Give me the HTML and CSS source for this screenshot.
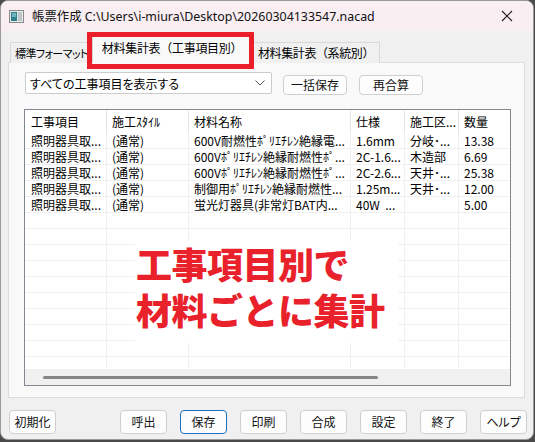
FILE: index.html
```html
<!DOCTYPE html>
<html lang="ja">
<head>
<meta charset="utf-8">
<link rel="stylesheet" href="styles.css">
</head>
<body>
<div class="window">
  <div class="titlebar">
    <svg class="appicon" width="15" height="13" viewBox="0 0 15 13">
      <rect x="0.5" y="0.5" width="14" height="12" fill="#e8e8e8" stroke="#8a8a8a"/>
      <rect x="2" y="2" width="6" height="9" fill="#2f7f8f"/>
      <rect x="3" y="3" width="4" height="4" fill="#6fb2c0"/>
      <rect x="9" y="2" width="4" height="9" fill="#bfc6c9"/>
    </svg>
    <span class="title">帳票作成 C:\Users\i-miura\Desktop\20260304133547.nacad</span>
    <svg class="close" width="12" height="12" viewBox="0 0 12 12">
      <path d="M1 1 L11 11 M11 1 L1 11" stroke="#222" stroke-width="1.1" fill="none"/>
    </svg>
  </div>
  <div class="content">
    <div class="tabs">
      <div class="tab t1">標準フォーマット</div>
      <div class="tab active t2">材料集計表（工事項目別）<span class="redbox"></span></div>
      <div class="tab t3">材料集計表（系統別）</div>
    </div>
    <div class="panel">
      <div class="toolbar">
        <div class="combo">
          <span>すべての工事項目を表示する</span>
          <svg class="chev" width="10" height="6" viewBox="0 0 10 6"><path d="M0.5 0.5 L5 5 L9.5 0.5" stroke="#555" stroke-width="1" fill="none"/></svg>
        </div>
        <button class="btn tb">一括保存</button>
        <button class="btn tb">再合算</button>
      </div>
      <div class="list">
        <div class="lhead">
          <div class="c c1">工事項目</div>
          <div class="c c2">施工ｽﾀｲﾙ</div>
          <div class="c c3">材料名称</div>
          <div class="c c4">仕様</div>
          <div class="c c5">施工区...</div>
          <div class="c c6">数量</div>
        </div>
        <div class="lbody">
          <div class="row"><div class="c c1">照明器具取...</div><div class="c c2">(通常)</div><div class="c c3">600V耐燃性ﾎﾟﾘｴﾁﾚﾝ絶縁電...</div><div class="c c4">1.6mm</div><div class="c c5">分岐･...</div><div class="c c6">13.38</div></div>
          <div class="row"><div class="c c1">照明器具取...</div><div class="c c2">(通常)</div><div class="c c3">600Vﾎﾟﾘｴﾁﾚﾝ絶縁耐燃性ﾎﾟ...</div><div class="c c4">2C-1.6...</div><div class="c c5">木造部</div><div class="c c6">6.69</div></div>
          <div class="row"><div class="c c1">照明器具取...</div><div class="c c2">(通常)</div><div class="c c3">600Vﾎﾟﾘｴﾁﾚﾝ絶縁耐燃性ﾎﾟ...</div><div class="c c4">2C-2.6...</div><div class="c c5">天井･...</div><div class="c c6">25.38</div></div>
          <div class="row"><div class="c c1">照明器具取...</div><div class="c c2">(通常)</div><div class="c c3">制御用ﾎﾟﾘｴﾁﾚﾝ絶縁耐燃性...</div><div class="c c4">1.25m...</div><div class="c c5">天井･...</div><div class="c c6">12.00</div></div>
          <div class="row"><div class="c c1">照明器具取...</div><div class="c c2">(通常)</div><div class="c c3">蛍光灯器具(非常灯BAT内...</div><div class="c c4">40W&nbsp;&nbsp;...</div><div class="c c5"></div><div class="c c6">5.00</div></div>
          <div class="row"><div class="c c1"></div><div class="c c2"></div><div class="c c3"></div><div class="c c4"></div><div class="c c5"></div><div class="c c6"></div></div>
          <div class="row"><div class="c c1"></div><div class="c c2"></div><div class="c c3"></div><div class="c c4"></div><div class="c c5"></div><div class="c c6"></div></div>
          <div class="row"><div class="c c1"></div><div class="c c2"></div><div class="c c3"></div><div class="c c4"></div><div class="c c5"></div><div class="c c6"></div></div>
          <div class="row"><div class="c c1"></div><div class="c c2"></div><div class="c c3"></div><div class="c c4"></div><div class="c c5"></div><div class="c c6"></div></div>
          <div class="row"><div class="c c1"></div><div class="c c2"></div><div class="c c3"></div><div class="c c4"></div><div class="c c5"></div><div class="c c6"></div></div>
          <div class="row"><div class="c c1"></div><div class="c c2"></div><div class="c c3"></div><div class="c c4"></div><div class="c c5"></div><div class="c c6"></div></div>
          <div class="row"><div class="c c1"></div><div class="c c2"></div><div class="c c3"></div><div class="c c4"></div><div class="c c5"></div><div class="c c6"></div></div>
          <div class="row"><div class="c c1"></div><div class="c c2"></div><div class="c c3"></div><div class="c c4"></div><div class="c c5"></div><div class="c c6"></div></div>
          <div class="row"><div class="c c1"></div><div class="c c2"></div><div class="c c3"></div><div class="c c4"></div><div class="c c5"></div><div class="c c6"></div></div>
          <div class="row"><div class="c c1"></div><div class="c c2"></div><div class="c c3"></div><div class="c c4"></div><div class="c c5"></div><div class="c c6"></div></div>
          <div class="callout">
            <div class="cline">工事項目別で</div>
            <div class="cline">材料ごとに集計</div>
          </div>
        </div>
        <div class="hscroll"><div class="thumb"></div></div>
      </div>
    </div>
  </div>
  <div class="footer">
    <button class="btn fb first">初期化</button>
    <button class="btn fb">呼出</button>
    <button class="btn fb focus">保存</button>
    <button class="btn fb">印刷</button>
    <button class="btn fb">合成</button>
    <button class="btn fb">設定</button>
    <button class="btn fb">終了</button>
    <button class="btn fb">ヘルプ</button>
  </div>
</div>
</body>
</html>
```

FILE: styles.css
```css
* { box-sizing: border-box; }
html, body { margin: 0; padding: 0; }
body {
  width: 535px;
  height: 442px;
  background: #4a4a4a;
  font-family: "Noto Sans CJK JP", sans-serif;
  font-size: 12px;
  color: #000;
  overflow: hidden;
}
.window {
  width: 534px;
  height: 440px;
  background: #f0f0f0;
  border: 1px solid #9a9a9a;
  border-radius: 8px;
  overflow: hidden;
  display: flex;
  flex-direction: column;
}
.titlebar {
  height: 30px;
  flex: none;
  background: #f9eef2;
  display: flex;
  align-items: center;
  padding-left: 8px;
  padding-right: 20px;
}
.appicon { flex: none; margin-right: 8px; }
.title {
  font-family: "Noto Sans", "Noto Sans CJK JP", sans-serif;
  font-size: 12.4px;
  color: #111;
  flex: 1;
  white-space: nowrap;
}
.close { flex: none; }
.content {
  padding: 0 8px 0 7px;
  flex: none;
}
.tabs {
  margin-top: 5px;
  height: 27px;
  display: flex;
  align-items: flex-end;
  padding-left: 2px;
}
.tab {
  height: 21px;
  border: 1px solid #d9d9d9;
  border-bottom: none;
  background: #f0f0f0;
  display: flex;
  align-items: center;
  justify-content: center;
  white-space: nowrap;
  font-size: 12px;
  line-height: 1;
  overflow: visible;
}
.t1 {
  width: 82px;
  font-size: 11px;
  letter-spacing: -0.6px;
  font-feature-settings: "palt";
  justify-content: flex-start;
  padding-left: 4px;
}
.t2 { width: 160px; }
.t3 { width: 128px; letter-spacing: -0.4px; }
.tab.active {
  height: 27px;
  background: #f9f9f9;
  position: relative;
  z-index: 1;
  padding-bottom: 4px;
  border-color: #d6d6d6;
  letter-spacing: -0.3px;
}
.redbox {
  position: absolute;
  left: -6px;
  right: -3px;
  top: -5px;
  bottom: -6px;
  border: 5px solid #ea1f2a;
  pointer-events: none;
}
.panel {
  margin-top: -1px;
  height: 336px;
  border: 1px solid #dcdcdc;
  background: #f9f9f9;
  padding: 9px 13px 0 16px;
}
.toolbar {
  height: 24px;
  display: flex;
  align-items: flex-start;
  font-feature-settings: "palt";
}
.combo {
  width: 247px;
  height: 22px;
  background: #fff;
  border: 1px solid #cccccc;
  border-radius: 2px;
  display: flex;
  align-items: center;
  padding-left: 4px;
  padding-right: 6px;
  justify-content: space-between;
  font-size: 12px;
}
.btn {
  font-family: "Noto Sans CJK JP", sans-serif;
  font-size: 12px;
  color: #111;
  background: #fdfdfd;
  border: 1px solid #cfcfcf;
  border-radius: 4px;
  padding: 0;
  margin: 0;
  line-height: 1;
  font-feature-settings: "palt";
}
.tb {
  width: 64px;
  height: 20px;
  margin-top: 3px;
  margin-left: 11px;
}
.tb + .tb { margin-left: 12px; }
.list {
  margin-top: 13px;
  margin-left: -1px;
  width: 487px;
  height: 277px;
  border: 1px solid #828790;
  background: #fff;
  display: flex;
  flex-direction: column;
}
.lhead {
  height: 23px;
  display: flex;
  flex: none;
}
.lhead .c {
  border-right: 1px solid #e5e5e5;
  line-height: 23px;
}
.lhead .c6 { border-right: none; }
.lbody {
  height: 236px;
  flex: none;
  overflow: hidden;
  position: relative;
}
.row {
  height: 16px;
  display: flex;
  border-bottom: 1px solid #f0f0f0;
}
.row .c {
  border-right: 1px solid #f0f0f0;
  line-height: 15px;
}
.row .c6 { border-right: none; }
.c {
  white-space: nowrap;
  overflow: hidden;
  padding-left: 5px;
  font-size: 12px;
  flex: none;
}
.c1 { width: 82px; padding-left: 6px; }
.c2 { width: 82px; }
.c3 { width: 162px; }
.c4 { width: 54px; }
.c5 { width: 54px; }
.c6 { width: 51px; }
.callout {
  position: absolute;
  left: 110px;
  top: 108px;
  width: 263px;
  height: 102px;
  background: #fff;
  color: #e9212b;
  font-family: "Noto Sans CJK JP", sans-serif;
  font-weight: 900;
  font-size: 36px;
  padding: 4px 0 0 1px;
  letter-spacing: -0.5px;
  white-space: nowrap;
  display: flex;
  flex-direction: column;
  gap: 9px;
}
.cline {
  height: 37px;
  line-height: 37px;
}
.hscroll {
  height: 16px;
  flex: none;
  background: #f0f0f0;
  display: flex;
  align-items: center;
  padding-left: 18px;
}
.thumb {
  width: 335px;
  height: 3px;
  border-radius: 2px;
  background: #858585;
}
.footer {
  margin-top: 12px;
  display: flex;
  padding: 0 6px 0 8px;
  gap: 13px;
}
.fb {
  width: 47px;
  height: 24px;
}
.fb.first { margin-right: auto; }
.fb.focus { border-color: #1f6fc0; }
```
